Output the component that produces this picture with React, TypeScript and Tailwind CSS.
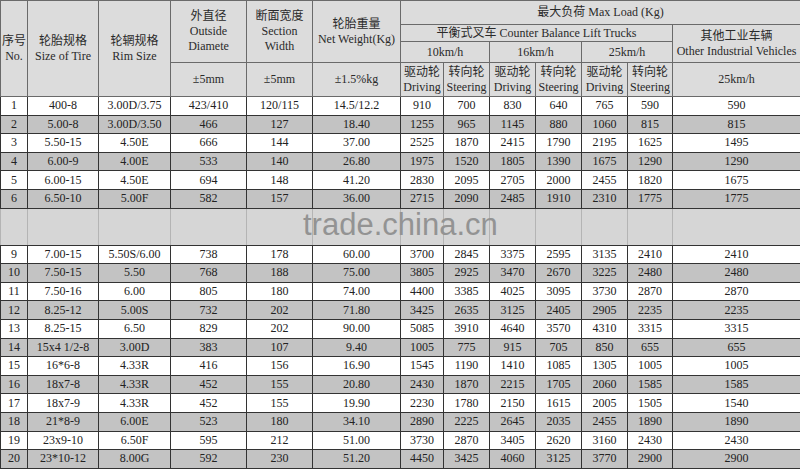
const rows: string[][] = [
  ["1", "400-8", "3.00D/3.75", "423/410", "120/115", "14.5/12.2", "910", "700", "830", "640", "765", "590", "590"],
  ["2", "5.00-8", "3.00D/3.50", "466", "127", "18.40", "1255", "965", "1145", "880", "1060", "815", "815"],
  ["3", "5.50-15", "4.50E", "666", "144", "37.00", "2525", "1870", "2415", "1790", "2195", "1625", "1495"],
  ["4", "6.00-9", "4.00E", "533", "140", "26.80", "1975", "1520", "1805", "1390", "1675", "1290", "1290"],
  ["5", "6.00-15", "4.50E", "694", "148", "41.20", "2830", "2095", "2705", "2000", "2455", "1820", "1675"],
  ["6", "6.50-10", "5.00F", "582", "157", "36.00", "2715", "2090", "2485", "1910", "2310", "1775", "1775"],
];

const rowsLower: string[][] = [
  ["9", "7.00-15", "5.50S/6.00", "738", "178", "60.00", "3700", "2845", "3375", "2595", "3135", "2410", "2410"],
  ["10", "7.50-15", "5.50", "768", "188", "75.00", "3805", "2925", "3470", "2670", "3225", "2480", "2480"],
  ["11", "7.50-16", "6.00", "805", "180", "74.00", "4400", "3385", "4025", "3095", "3730", "2870", "2870"],
  ["12", "8.25-12", "5.00S", "732", "202", "71.80", "3425", "2635", "3125", "2405", "2905", "2235", "2235"],
  ["13", "8.25-15", "6.50", "829", "202", "90.00", "5085", "3910", "4640", "3570", "4310", "3315", "3315"],
  ["14", "15x4 1/2-8", "3.00D", "383", "107", "9.40", "1005", "775", "915", "705", "850", "655", "655"],
  ["15", "16*6-8", "4.33R", "416", "156", "16.90", "1545", "1190", "1410", "1085", "1305", "1005", "1005"],
  ["16", "18x7-8", "4.33R", "452", "155", "20.80", "2430", "1870", "2215", "1705", "2060", "1585", "1585"],
  ["17", "18x7-9", "4.33R", "452", "155", "19.90", "2230", "1780", "2150", "1615", "2005", "1505", "1540"],
  ["18", "21*8-9", "6.00E", "523", "180", "34.10", "2890", "2225", "2645", "2035", "2455", "1890", "1890"],
  ["19", "23x9-10", "6.50F", "595", "212", "51.00", "3730", "2870", "3405", "2620", "3160", "2430", "2430"],
  ["20", "23*10-12", "8.00G", "592", "230", "51.20", "4450", "3425", "4060", "3125", "3770", "2900", "2900"],
];

const th = "border border-[#6a6a6a] bg-[#dcdcdc] p-0 font-normal text-[#2a2a2a] whitespace-nowrap";
const td = "border border-[#333] p-0 whitespace-nowrap";

function DataRow({ cells, grey }: { cells: string[]; grey: boolean }) {
  return (
    <tr className={grey ? "h-[18.6px] bg-[#c3c3c3]" : "h-[18.6px] bg-white"}>
      {cells.map((c, i) => (
        <td key={i} className={td}>
          {c}
        </td>
      ))}
    </tr>
  );
}

export default function App() {
  return (
    <div className="relative w-[800px] overflow-hidden bg-white font-['Liberation_Serif','Noto_Sans_CJK_SC',serif] text-[12px] leading-[15px] text-[#222]">
      <table className="w-[800px] table-fixed border-collapse text-center">
        <colgroup>
          <col className="w-[27px]" />
          <col className="w-[71px]" />
          <col className="w-[72px]" />
          <col className="w-[76px]" />
          <col className="w-[66px]" />
          <col className="w-[88px]" />
          <col className="w-[43px]" />
          <col className="w-[46px]" />
          <col className="w-[46px]" />
          <col className="w-[46px]" />
          <col className="w-[46px]" />
          <col className="w-[45px]" />
          <col className="w-[128px]" />
        </colgroup>
        <thead>
          <tr className="h-[24px]">
            <th rowSpan={4} className={th}>
              序号
              <br />
              No.
            </th>
            <th rowSpan={4} className={th}>
              轮胎规格
              <br />
              Size of Tire
            </th>
            <th rowSpan={4} className={th}>
              轮辋规格
              <br />
              Rim Size
            </th>
            <th rowSpan={3} className={th}>
              外直径
              <br />
              Outside
              <br />
              Diamete
            </th>
            <th rowSpan={3} className={th}>
              断面宽度
              <br />
              Section
              <br />
              Width
            </th>
            <th rowSpan={3} className={th}>
              轮胎重量
              <br />
              Net Weight(Kg)
            </th>
            <th colSpan={7} className={th}>
              最大负荷 Max Load (Kg)
            </th>
          </tr>
          <tr className="h-[17px]">
            <th colSpan={6} className={th}>
              平衡式叉车 Counter Balance Lift Trucks
            </th>
            <th rowSpan={2} className={th}>
              其他工业车辆
              <br />
              Other Industrial Vehicles
            </th>
          </tr>
          <tr className="h-[21px]">
            <th colSpan={2} className={th}>
              10km/h
            </th>
            <th colSpan={2} className={th}>
              16km/h
            </th>
            <th colSpan={2} className={th}>
              25km/h
            </th>
          </tr>
          <tr className="h-[34px]">
            <th className={th}>±5mm</th>
            <th className={th}>±5mm</th>
            <th className={th}>±1.5%kg</th>
            <th className={th}>
              驱动轮
              <br />
              Driving
            </th>
            <th className={th}>
              转向轮
              <br />
              Steering
            </th>
            <th className={th}>
              驱动轮
              <br />
              Driving
            </th>
            <th className={th}>
              转向轮
              <br />
              Steering
            </th>
            <th className={th}>
              驱动轮
              <br />
              Driving
            </th>
            <th className={th}>
              转向轮
              <br />
              Steering
            </th>
            <th className={th}>25km/h</th>
          </tr>
        </thead>
        <tbody>
          {rows.map((r, i) => (
            <DataRow key={r[0]} cells={r} grey={i % 2 === 1} />
          ))}
          <tr className="h-[37px] bg-[#d6d6d6]">
            {Array.from({ length: 13 }).map((_, i) => (
              <td key={i} className="border-x border-x-[#b4b4b4] border-t border-t-[#bdbdbd] border-b border-b-[#333] p-0" />
            ))}
          </tr>
          {rowsLower.map((r, i) => (
            <DataRow key={r[0]} cells={r} grey={i % 2 === 1} />
          ))}
        </tbody>
      </table>
      <div className="pointer-events-none absolute left-[303px] top-[209px] font-['Liberation_Sans',sans-serif] text-[31px] leading-none text-[#939393]">
        trade.china.cn
      </div>
    </div>
  );
}
